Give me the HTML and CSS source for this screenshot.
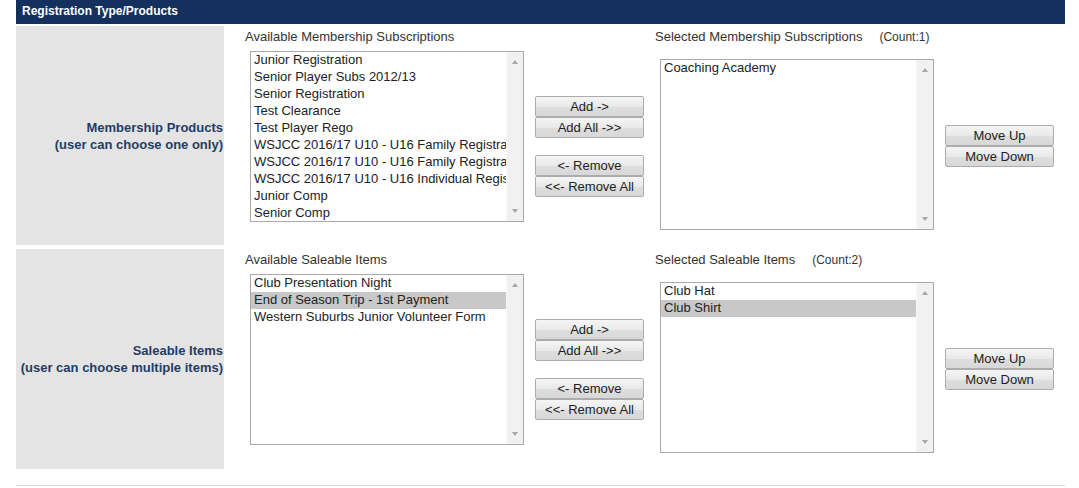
FILE: index.html
```html
<!DOCTYPE html>
<html lang="en">
<head>
    <meta charset="UTF-8">
    <meta name="viewport" content="width=device-width, initial-scale=1.0">
    <title>Registration Type/Products</title>
    <link rel="stylesheet" href="styles.css">
</head>
<body>
    <div class="panel">
        <div class="panel-head">Registration Type/Products</div>

        <div class="panel-row first">
            <div class="row-label">Membership Products<br>(user can choose one only)</div>
            <div class="picker">
                <div class="pick-title">Available Membership Subscriptions</div>
                <div></div>
                <div class="pick-title">Selected Membership Subscriptions<span class="count">(Count:1)</span></div>
                <div></div>

                <div class="listbox avail">
                    <div class="options">
                        <div class="opt">Junior Registration</div>
                        <div class="opt">Senior Player Subs 2012/13</div>
                        <div class="opt">Senior Registration</div>
                        <div class="opt">Test Clearance</div>
                        <div class="opt">Test Player Rego</div>
                        <div class="opt">WSJCC 2016/17 U10 - U16 Family Registration (2 children)</div>
                        <div class="opt">WSJCC 2016/17 U10 - U16 Family Registration (3 children)</div>
                        <div class="opt">WSJCC 2016/17 U10 - U16 Individual Registration</div>
                        <div class="opt">Junior Comp</div>
                        <div class="opt">Senior Comp</div>
                    </div>
                    <div class="scroll"><span class="arr up"></span><span class="arr down"></span></div>
                </div>
                <div class="btn-stack">
                    <button class="btn">Add -&gt;</button>
                    <button class="btn">Add All -&gt;&gt;</button>
                    <button class="btn spaced">&lt;- Remove</button>
                    <button class="btn">&lt;&lt;- Remove All</button>
                </div>
                <div class="listbox chosen">
                    <div class="options">
                        <div class="opt">Coaching Academy</div>
                    </div>
                    <div class="scroll"><span class="arr up"></span><span class="arr down"></span></div>
                </div>
                <div class="btn-stack">
                    <button class="btn">Move Up</button>
                    <button class="btn">Move Down</button>
                </div>
            </div>
        </div>

        <div class="panel-row last">
            <div class="row-label">Saleable Items<br>(user can choose multiple items)</div>
            <div class="picker">
                <div class="pick-title">Available Saleable Items</div>
                <div></div>
                <div class="pick-title">Selected Saleable Items<span class="count">(Count:2)</span></div>
                <div></div>

                <div class="listbox avail">
                    <div class="options">
                        <div class="opt">Club Presentation Night</div>
                        <div class="opt picked">End of Season Trip - 1st Payment</div>
                        <div class="opt">Western Suburbs Junior Volunteer Form</div>
                    </div>
                    <div class="scroll"><span class="arr up"></span><span class="arr down"></span></div>
                </div>
                <div class="btn-stack">
                    <button class="btn">Add -&gt;</button>
                    <button class="btn">Add All -&gt;&gt;</button>
                    <button class="btn spaced">&lt;- Remove</button>
                    <button class="btn">&lt;&lt;- Remove All</button>
                </div>
                <div class="listbox chosen">
                    <div class="options">
                        <div class="opt">Club Hat</div>
                        <div class="opt picked">Club Shirt</div>
                    </div>
                    <div class="scroll"><span class="arr up"></span><span class="arr down"></span></div>
                </div>
                <div class="btn-stack">
                    <button class="btn">Move Up</button>
                    <button class="btn">Move Down</button>
                </div>
            </div>
        </div>

        <div class="panel-foot"></div>
    </div>
</body>
</html>
```

FILE: styles.css
```css
body {
    margin: 0;
    font-family: "Liberation Sans", Arial, sans-serif;
    font-size: 13px;
    color: #333333;
    background-color: #ffffff;
}
.panel {
    width: 1049px;
    margin: 0 16px;
}
.panel-head {
    height: 24px;
    line-height: 23px;
    padding-left: 6px;
    background-color: #13305f;
    color: #ffffff;
    font-size: 12px;
    font-weight: bold;
}
.panel-row {
    display: grid;
    grid-template-columns: 208px 1fr;
    margin-top: 4px;
}
.panel-row.first {
    margin-top: 2px;
}
.row-label {
    display: flex;
    align-items: center;
    justify-content: flex-end;
    text-align: right;
    padding-right: 1px;
    background-color: #e4e4e4;
    color: #1f3d66;
    font-weight: bold;
    line-height: 17px;
}
.picker {
    display: grid;
    grid-template-columns: 279px 109px 279px 109px;
    grid-template-rows: 25px 190px;
    column-gap: 11px;
    align-items: center;
    padding: 0 0 4px 21px;
}
.panel-row.last .picker {
    padding-bottom: 5px;
}
.pick-title {
    align-self: start;
    padding-top: 3px;
    line-height: 16px;
    white-space: nowrap;
}
.count {
    margin-left: 17px;
    font-size: 12px;
}
.listbox {
    display: flex;
    width: 274px;
    height: 171px;
    margin-left: 5px;
    box-sizing: border-box;
    border: 1px solid #a9a9a9;
    background-color: #ffffff;
}
.listbox.avail {
    align-self: start;
}
.listbox.chosen {
    margin-top: -3px;
}
.options {
    flex: 1;
    overflow: hidden;
}
.opt {
    height: 17px;
    line-height: 16px;
    padding-left: 3px;
    white-space: nowrap;
    color: #222222;
}
.opt.picked {
    background-color: #c8c8c8;
}
.scroll {
    display: flex;
    flex-direction: column;
    justify-content: space-between;
    align-items: center;
    width: 16px;
    padding: 8px 0;
    background-color: #f1f1f1;
    border-left: 1px solid #f7f7f7;
}
.arr {
    width: 0;
    height: 0;
    border-left: 3.5px solid transparent;
    border-right: 3.5px solid transparent;
}
.arr.up {
    border-bottom: 4px solid #a6a6a6;
}
.arr.down {
    border-top: 4px solid #a6a6a6;
}
.btn-stack {
    display: flex;
    flex-direction: column;
}
.btn {
    width: 109px;
    height: 21px;
    margin: 0;
    padding: 0;
    border: 1px solid #acacac;
    border-radius: 2px;
    background: linear-gradient(#f5f5f5, #e9e9e9 50%, #dedede 51%, #d8d8d8);
    font-family: "Liberation Sans", Arial, sans-serif;
    font-size: 13px;
    line-height: 19px;
    color: #222222;
}
.btn.spaced {
    margin-top: 17px;
}
.panel-foot {
    margin-top: 16px;
    border-top: 1px solid #d4d4d4;
}
```
